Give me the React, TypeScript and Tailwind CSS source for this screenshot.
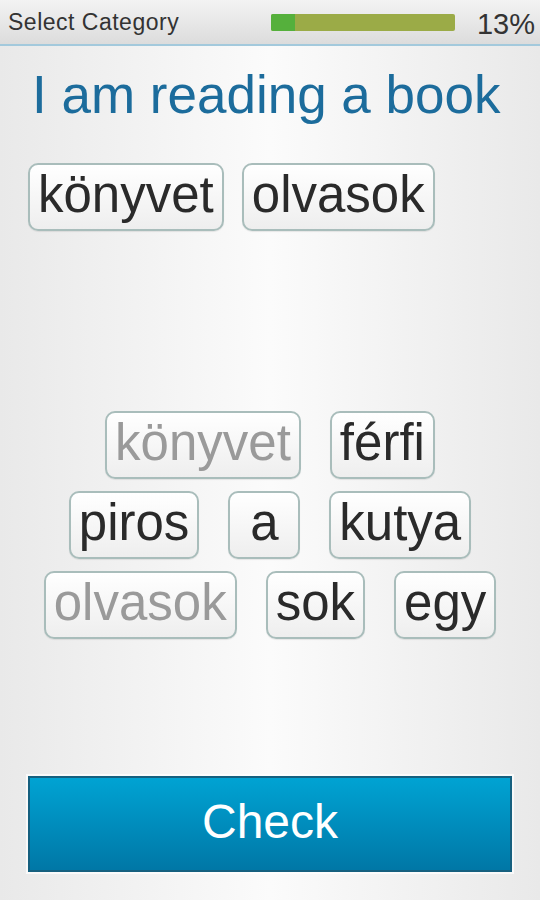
const answer = ["könyvet", "olvasok"];

const bank: { word: string; used?: boolean }[][] = [
  [{ word: "könyvet", used: true }, { word: "férfi" }],
  [{ word: "piros" }, { word: "a" }, { word: "kutya" }],
  [{ word: "olvasok", used: true }, { word: "sok" }, { word: "egy" }],
];

function Chip({ word, used }: { word: string; used?: boolean }) {
  return (
    <div
      className={
        "flex h-[68px] min-w-[72px] items-center justify-center rounded-[10px] border-2 border-[#a9bdbb] bg-[linear-gradient(to_bottom,#ffffff,#eeeeee)] px-2 text-[51px] leading-none shadow-[0_1px_1px_rgba(0,0,0,0.08)] " +
        (used ? "text-[#9a9a9a]" : "text-[#2a2a2a]")
      }
    >
      <span className="-mt-1.5">{word}</span>
    </div>
  );
}

export default function App() {
  return (
    <div className="flex h-[900px] w-[540px] flex-col bg-[linear-gradient(to_right,#e9e9e9,#fbfbfb_50%,#e9e9e9)] font-['Liberation_Sans',Arial,sans-serif]">
      <div className="flex h-[46px] items-center border-b-2 border-[#a3c9dc] bg-[linear-gradient(to_bottom,#f3f3f3,#dcdcdc)] pl-2 pr-[5px]">
        <span className="text-[23px] tracking-[0.5px] text-[#333]">Select Category</span>
        <div className="ml-auto flex h-[17px] w-[184px] overflow-hidden rounded-[2px] bg-[#9bab47]">
          <div className="w-[24px] bg-[#55b03c]" />
        </div>
        <span className="ml-[22px] mt-1 text-[29px] leading-none text-[#333]">13%</span>
      </div>

      <h1 className="mt-[22px] pl-[32px] text-[53px] leading-[53px] text-[#1c6c9c]">I am reading a book</h1>

      <div className="mt-[42px] flex gap-[18px] px-[28px]">
        {answer.map((w) => (
          <Chip key={w} word={w} />
        ))}
      </div>

      <div className="mt-[180px] flex flex-col items-center gap-[12px]">
        {bank.map((row, i) => (
          <div key={i} className="flex gap-[29px]">
            {row.map((c) => (
              <Chip key={c.word} word={c.word} used={c.used} />
            ))}
          </div>
        ))}
      </div>

      <button className="mx-[28px] mt-[137px] flex h-[96px] items-center justify-center border-2 border-[#16607f] bg-[linear-gradient(to_bottom,#00a3d3,#0077a6)] text-[48px] text-white shadow-[0_0_0_2px_rgba(255,255,255,0.7)]">
        <span className="-mt-1">Check</span>
      </button>
    </div>
  );
}
